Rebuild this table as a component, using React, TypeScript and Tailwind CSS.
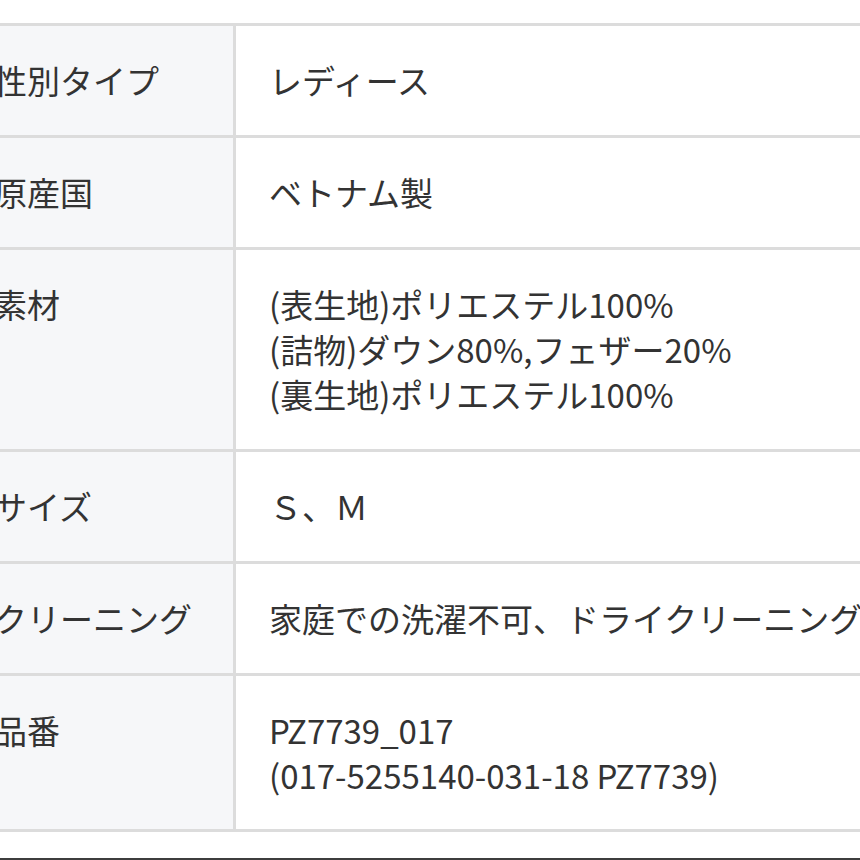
import React from "react";

const rows: { label: string; value: string[]; pb: string }[] = [
  { label: "性別タイプ", value: ["レディース"], pb: "pb-[32px]" },
  { label: "原産国", value: ["ベトナム製"], pb: "pb-[32px]" },
  {
    label: "素材",
    value: [
      "(表生地)ポリエステル100%",
      "(詰物)ダウン80%,フェザー20%",
      "(裏生地)ポリエステル100%",
    ],
    pb: "pb-[32px]",
  },
  { label: "サイズ", value: ["Ｓ、Ｍ"], pb: "pb-[32px]" },
  { label: "クリーニング", value: ["家庭での洗濯不可、ドライクリーニング"], pb: "pb-[32px]" },
  { label: "品番", value: ["PZ7739_017", "(017-5255140-031-18 PZ7739)"], pb: "pb-[31px]" },
];

export default function App() {
  return (
    <div
      className="w-[860px] h-[860px] bg-white overflow-hidden pt-[23px] text-[#333333]"
      style={{ fontFamily: '"Noto Sans CJK JP", "Noto Sans", sans-serif' }}
    >
      <div className="ml-[-38px] w-[960px] border-t-[3px] border-[#dcdcdc]">
        {rows.map((r) => (
          <div key={r.label} className="flex border-b-[3px] border-[#dcdcdc]">
            <div
              className={`w-[274px] shrink-0 bg-[#f6f7f9] border-r-[3px] border-[#dcdcdc] pl-[32px] pt-[32px] text-[33px] leading-[45px] whitespace-nowrap ${r.pb}`}
            >
              {r.label}
            </div>
            <div
              className={`flex-1 pl-[33px] pt-[32px] text-[33px] leading-[45px] whitespace-nowrap ${r.pb}`}
            >
              {r.value.map((v) => (
                <div key={v}>{v}</div>
              ))}
            </div>
          </div>
        ))}
      </div>
      <div className="mt-[26px] h-[3px] bg-[#3d3d3d]" />
    </div>
  );
}
